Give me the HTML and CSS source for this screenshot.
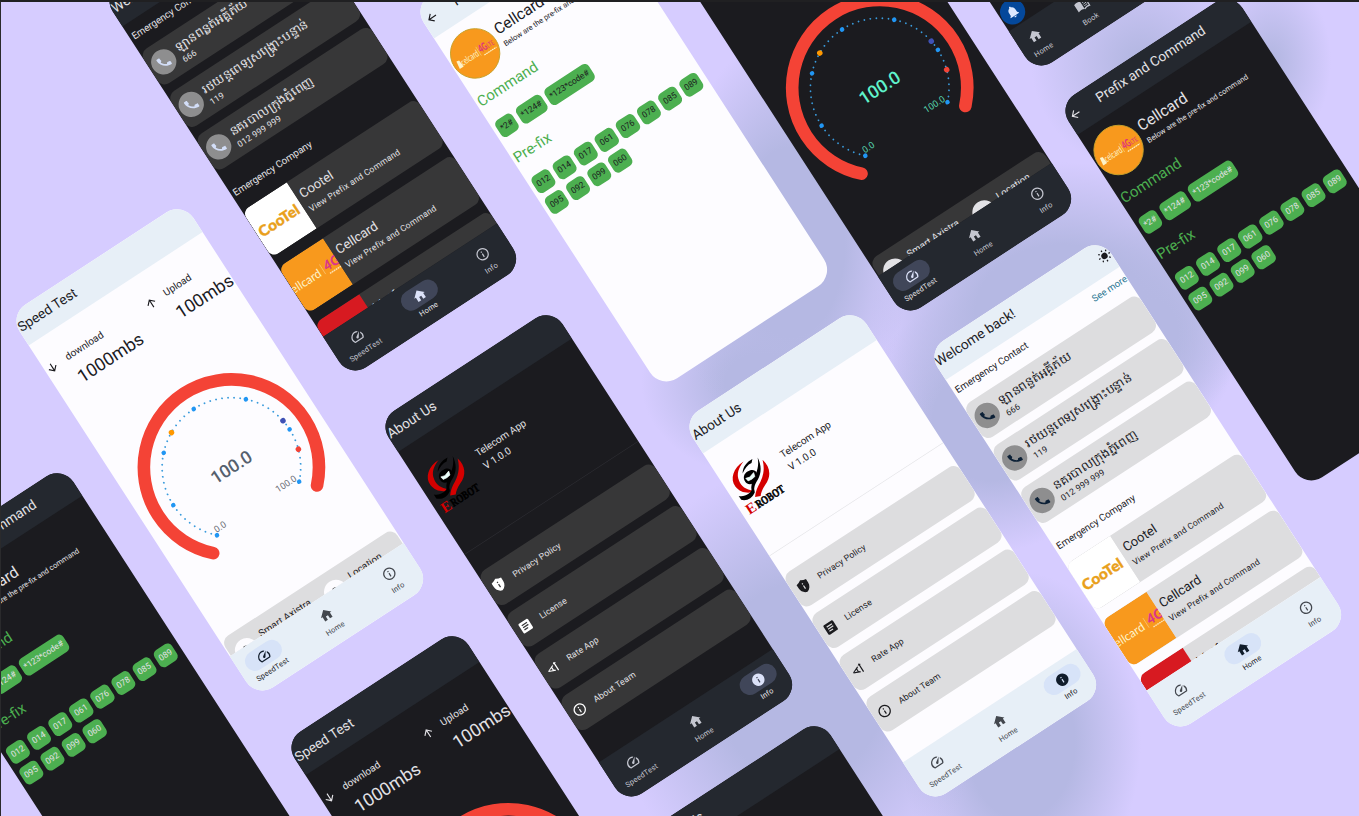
FILE: index.html
```html
<!DOCTYPE html>
<html lang="en">
<head>
<meta charset="utf-8">
<title>Telecom App</title>
<link rel="stylesheet" href="styles.css">
</head>
<body>
<svg class="sprite" aria-hidden="true">
  <symbol id="home" viewBox="0 0 24 24"><path d="M10 20v-6h4v6h5v-8h3L12 3 2 12h3v8z"/></symbol>
  <symbol id="info" viewBox="0 0 24 24"><path d="M11 7h2v2h-2zm0 4h2v6h-2zm1-9C6.48 2 2 6.48 2 12s4.48 10 10 10 10-4.48 10-10S17.52 2 12 2zm0 18c-4.41 0-8-3.59-8-8s3.59-8 8-8 8 3.59 8 8-3.59 8-8 8z"/></symbol>
  <symbol id="info-fill" viewBox="0 0 24 24"><path d="M12 2C6.48 2 2 6.48 2 12s4.48 10 10 10 10-4.48 10-10S17.52 2 12 2zm1 15h-2v-6h2v6zm0-8h-2V7h2v2z"/></symbol>
  <symbol id="speed" viewBox="0 0 24 24"><path d="M20.38 8.57l-1.23 1.85a8 8 0 0 1-.22 7.58H5.07A8 8 0 0 1 15.58 6.85l1.85-1.23A10 10 0 0 0 3.35 19a2 2 0 0 0 1.72 1h13.85a2 2 0 0 0 1.74-1 10 10 0 0 0-.27-10.44zm-9.79 6.84a2 2 0 0 0 2.83 0l5.66-8.49-8.49 5.66a2 2 0 0 0 0 2.83z"/></symbol>
  <symbol id="call" viewBox="0 0 24 24"><path d="M20.01 15.38c-1.23 0-2.42-.2-3.53-.56-.35-.12-.74-.03-1.01.24l-1.57 1.97c-2.83-1.35-5.48-3.9-6.89-6.83l1.95-1.66c.27-.28.35-.67.24-1.02-.37-1.11-.56-2.3-.56-3.53 0-.54-.45-.99-.99-.99H4.19C3.65 3 3 3.24 3 3.99 3 13.28 10.73 21 20.01 21c.71 0 .99-.63.99-1.18v-3.45c0-.54-.45-.99-.99-.99z"/></symbol>
  <symbol id="back" viewBox="0 0 24 24"><path d="M20 11H7.83l5.59-5.59L12 4l-8 8 8 8 1.41-1.41L7.83 13H20v-2z"/></symbol>
  <symbol id="down" viewBox="0 0 24 24"><path d="M20 12l-1.41-1.41L13 16.17V4h-2v12.17l-5.58-5.59L4 12l8 8z"/></symbol>
  <symbol id="up" viewBox="0 0 24 24"><path d="M4 12l1.41 1.41L11 7.83V20h2V7.83l5.58 5.59L20 12l-8-8z"/></symbol>
  <symbol id="shield" viewBox="0 0 24 24"><path d="M12 1Q16 4 21 4.5V11c0 5.55-3.84 10.74-9 12-5.16-1.26-9-6.45-9-12V4.5Q8 4 12 1zm1 16v-6h-2v6zm0-8V7h-2v2z"/></symbol>
  <symbol id="article" viewBox="0 0 24 24"><path d="M19 3H5c-1.1 0-2 .9-2 2v14c0 1.1.9 2 2 2h14c1.1 0 2-.9 2-2V5c0-1.1-.9-2-2-2zm-5 14H7v-2h7v2zm3-4H7v-2h10v2zm0-4H7V7h10v2z"/></symbol>
  <symbol id="rate" viewBox="0 0 24 24"><path d="M3 12v1.5l11 4.75v-2.1l-2.2-.9v-5l2.2-.9v-2.1L3 12zm7 2.62l-5.02-1.87L10 10.88v3.74zm8-10.37l-3 3h2v12.5h2V7.25h2l-3-3z"/></symbol>
  <symbol id="bell" viewBox="0 0 24 24"><path d="M12 22c1.1 0 2-.9 2-2h-4c0 1.1.89 2 2 2zm6-6v-5c0-3.07-1.64-5.64-4.5-6.32V4c0-.83-.67-1.5-1.5-1.5s-1.5.67-1.5 1.5v.68C7.63 5.36 6 7.92 6 11v5l-2 2v1h16v-1l-2-2z"/></symbol>
  <symbol id="book" viewBox="0 0 24 24"><path d="M1 5.5C4 4 8.5 4 12 6v14C8.5 18 4 18 1 19.5z"/><path d="M12 6c3.5-2 7.5-2 10-.5v13.5c-3-1.3-7-1-10 1" fill="none" stroke="currentColor" stroke-width="1.8"/><path d="M14 9.5q3-1.2 6-.6M14 12.5q3-1.2 6-.6M14 15.5q3-1.2 6-.6" fill="none" stroke="currentColor" stroke-width="1.4"/></symbol>
  <symbol id="pin" viewBox="0 0 24 24"><path d="M12 2C8 2 5 5 5 9c0 5 7 13 7 13s7-8 7-13c0-4-3-7-7-7z"/></symbol>
  <symbol id="sun" viewBox="0 0 24 24"><circle cx="12" cy="12" r="5.5"/><path d="M12 .8v3M12 20.2v3M.8 12h3M20.2 12h3M4.1 4.1l2 2M17.9 17.9l2 2M4.1 19.9l2-2M17.9 6.1l2-2" stroke="currentColor" stroke-width="2.2"/></symbol>
  <symbol id="cootel" viewBox="0 0 96 96"><rect width="96" height="96" fill="#fff"/><text x="8" y="58" textLength="80" lengthAdjust="spacingAndGlyphs" font-family="Lato, sans-serif" font-weight="900" font-size="26" fill="#e9a01b" stroke="#e9a01b" stroke-width=".6">CooTel</text></symbol>
  <symbol id="cellcard" viewBox="0 0 96 96"><rect width="96" height="96" fill="#f8991d"/><text x="0" y="54" textLength="60" lengthAdjust="spacingAndGlyphs" font-family="Lato, sans-serif" font-size="21" fill="#fdf3c8">ellcard</text><path d="M66 35v20" stroke="#fbd48c"/><text x="70" y="52" font-family="Lato, sans-serif" font-weight="900" font-style="italic" font-size="24" fill="#d9368b">4G</text><path d="M73 58h25" stroke="#fbe0b0" stroke-width="2.5" stroke-dasharray="3 1"/></symbol>
  <symbol id="cellcard-round" viewBox="0 0 88 88"><circle cx="44" cy="44" r="43" fill="#f8991d" stroke="#c5a12c" stroke-width="1.5"/><path d="M7 52l2-14 5 1 1 13z" fill="#fdf3c8"/><text x="15" y="51" textLength="34" lengthAdjust="spacingAndGlyphs" font-family="Lato, sans-serif" font-size="17" fill="#fdf3c8">celcard</text><path d="M51 35v18" stroke="#fbd48c"/><text x="53" y="49" textLength="15" lengthAdjust="spacingAndGlyphs" font-family="Lato, sans-serif" font-weight="900" font-size="19" fill="#e0357c">4G</text><text x="68" y="49" textLength="14" lengthAdjust="spacingAndGlyphs" font-family="Lato, sans-serif" font-size="12" fill="#e0357c">LTE</text><path d="M56 55h25" stroke="#fdf3c8" stroke-width="2" stroke-dasharray="3 1"/></symbol>
  <symbol id="erobot" viewBox="0 0 76 86">
    <path d="M42 0C20 0 5 13 6 29c1 11 7 18 16 23l7 1C18 43 15 34 17 24 19 12 28 5 42 0z" fill="#d40000"/>
    <path d="M71 16c5 18-3 33-20 39-9 4-14 8-17 12l-9-4c4-5 8-9 15-13 14-7 25-16 31-34z" fill="#d40000"/>
    <path d="M66 8c-2 16-9 26-20 32-9 4-13 7-17 14l-3-4c3-7 8-11 15-16 11-6 19-12 25-26z" fill="#000"/>
    <path d="M2 46c9 8 20 8 30 1l-3 9c-10 7-21 5-27-2zM57 5c-11-1-22 2-28 12 8-6 16-8 23-7z" fill="#000"/>
    <path d="M25 31c0-8 6-13 14-12 8 0 12 5 11 10-3 8-9 12-15 12s-10-4-10-10z" fill="#000"/>
    <path d="M29 27l7 2 10-3-2 7-7 1-7-1z" fill="#e8fffa" stroke="#fff" stroke-width="1"/>
    <text x="0" y="84" font-family="Liberation Serif, serif" font-weight="700" font-size="26" fill="#d40000">E</text>
    <text x="19" y="83" textLength="56" lengthAdjust="spacingAndGlyphs" font-family="Liberation Serif, serif" font-weight="700" font-size="20" fill="#000" stroke="#000" stroke-width=".9">ROBOT</text>
  </symbol>
  <symbol id="gauge" viewBox="-165 -165 330 330">
    <path d="M-107.8 107.8A152.5 152.5 0 1 1 107.8 107.8" fill="none" stroke="#f44336" stroke-width="22" stroke-linecap="round"/>
    <path d="M-85.3 85.3A120.7 120.7 0 1 1 85.3 85.3" fill="none" stroke="#3a9bdc" stroke-width="3.2" stroke-linecap="round" stroke-dasharray="0 1" pathLength="54"/>
    <g fill="#2196f3"><circle cx="-85.3" cy="85.3" r="4"/><circle cx="-120.7" cy="0" r="4"/><circle cx="-85.3" cy="-85.3" r="4"/><circle cx="0" cy="-120.7" r="4"/><circle cx="85.3" cy="-85.3" r="4"/><circle cx="120.7" cy="0" r="4"/><circle cx="85.3" cy="85.3" r="4"/></g>
    <circle cx="-54.8" cy="-107.5" r="4.8" fill="#ff9800"/><circle cx="119.2" cy="-18.9" r="4.8" fill="#3f51b5"/><circle cx="114.8" cy="37.3" r="4.8" fill="#f44336"/>
  </symbol>
</svg>
<main class="canvas" id="canvas"></main>
<script src="app.js"></script>
</body>
</html>
```

FILE: styles.css
```css
* { box-sizing: border-box; }
body { margin: 0; font-family: Roboto, "Noto Sans", sans-serif; }
.sprite { position: absolute; width: 0; height: 0; }
svg { fill: currentColor; flex: none; display: block; }

.canvas {
  position: relative;
  width: 1359px;
  height: 816px;
  overflow: hidden;
  border-top: 2px solid #202022;
  border-left: 1px solid #2a2a2c;
  background:
    radial-gradient(ellipse 120px 210px at 790px 240px, #b5b8e3 45%, #b5b8e300 100%),
    radial-gradient(ellipse 190px 150px at 1060px 310px, #b5b8e3 45%, #b5b8e300 100%),
    radial-gradient(ellipse 130px 130px at 990px 420px, #b5b8e3 45%, #b5b8e300 100%),
    radial-gradient(ellipse 90px 110px at 1150px 330px, #b5b8e3 30%, #b5b8e300 100%),
    radial-gradient(ellipse 110px 110px at 1140px 60px, #b5b8e3 10%, #b5b8e300 100%),
    radial-gradient(ellipse 60px 90px at 1270px 60px, #b5b8e3 10%, #b5b8e300 100%),
    radial-gradient(ellipse 190px 220px at 800px 680px, #b5b8e3 45%, #b5b8e300 100%),
    radial-gradient(ellipse 120px 170px at 1020px 740px, #b5b8e3 45%, #b5b8e300 100%),
    radial-gradient(ellipse 120px 95px at 760px 380px, #b5b8e3 30%, #b5b8e300 100%),
    #d6ccff;
}

/* Phones are pinned by their centre on the tilted board. */
.phone {
  --ink: #1b1b1f;
  --bg: #fdfcff;
  --bar: #e7eff7;
  --card: #dddddf;
  --muted: #43474e;
  --pill: #d7e3f8;
  --active: #101c2b;
  --avatar: #fdfcff;
  --call: #0c2036;
  --accent: #55606e;
  --tick: #6a6d75;
  --line: #e2e2e5;
  --top: 63px;
  --foot: 86px;
  position: absolute;
  width: 361px;
  height: 793px;
  margin: -396.5px 0 0 -180.5px;
  transform: translate(-.7px, -1.7px) rotate(-33.1deg) skewX(-.2deg) scale(.575);
  display: flex;
  flex-direction: column;
  overflow: hidden;
  border-radius: 34px;
  background: var(--bg);
  color: var(--ink);
}
.dark {
  --ink: #e3e2e6;
  --bg: #1b1b1f;
  --bar: #24282f;
  --card: #373738;
  --muted: #c4c6d0;
  --pill: #404659;
  --active: #dce2f9;
  --avatar: #e3e2e6;
  --call: #d3def8;
  --accent: #5ff3cb;
  --tick: #58d6b0;
  --line: #2e2e33;
}

.bar { height: var(--top); flex: none; display: flex; align-items: flex-end; justify-content: space-between; padding: 0 0 20px 2px; background: var(--bar); }
.bar h1 { margin: 0; font-size: 23.8px; line-height: 28px; font-weight: 400; white-space: nowrap; }
.bar .sun { width: 24px; height: 24px; margin: 0 0 -2px 0; }
.bar.with-back { justify-content: flex-start; gap: 34px; padding-left: 5px; }
.with-back svg { width: 24px; height: 24px; }
.body { flex: 1; min-height: 0; overflow: hidden; display: flex; flex-direction: column; }

.nav { flex: none; height: var(--foot); margin: 0 -15px; padding-top: 13px; display: flex; background: var(--bar); color: var(--muted); font-size: 13px; line-height: 16px; letter-spacing: .4px; }
.nav div { flex: 1; display: flex; flex-direction: column; align-items: center; gap: 4px; }
.nav span { width: 70px; height: 35px; border-radius: 18px; display: grid; place-items: center; }
.nav svg { width: 26px; height: 26px; }
.nav .on { color: var(--ink); }
.nav .on span { background: var(--pill); color: var(--active); }

.row-head { display: flex; justify-content: space-between; padding: 15px 1px 0 5px; font-size: 17px; line-height: 20px; flex: none; }
.row-head a { color: #1f7490; font-size: 16.5px; margin-top: -2px; }
.contacts { display: flex; flex-direction: column; gap: 16px; margin: 20px 0 21px; }
.contact { height: 72px; border-radius: 15px; background: var(--card); display: flex; gap: 8px; padding: 14px 0 0 5px; }
.contact i { width: 44px; height: 44px; border-radius: 50%; background: #8e8e8f; color: var(--call); display: grid; place-items: center; }
.contact i svg { width: 27px; height: 27px; }
.contact b { display: block; width: max-content; font-weight: 400; font-size: 21px; line-height: 26px; white-space: nowrap; transform: scaleX(1.08); transform-origin: 0 0; }
.sub { display: block; font-size: 15px; letter-spacing: .4px; line-height: 18px; white-space: nowrap; }
.contact .sub { margin-top: 3px; }
.companies { display: flex; flex-direction: column; gap: 20px; margin-top: 24px; }
.company { height: 96px; flex: none; border-radius: 14px; overflow: hidden; background: var(--card); display: flex; gap: 8px; }
.company > svg, .swatch { width: 96px; height: 96px; margin-left: -3px; flex: none; }
.swatch { background: #d71a21; }
.company b { display: block; font-weight: 400; font-size: 22.8px; line-height: 27px; padding: 18px 0 8px; }
.company:last-child b { padding-top: 22px; }

.stats { display: grid; grid-template-columns: 205px 1fr; padding: 43px 0 0 2px; }
.stat { display: flex; gap: 17px; font-size: 17.4px; line-height: 20px; }
.stat > svg { width: 24px; height: 24px; }
.stat + .stat { gap: 16px; }
.stat b { display: block; font-weight: 400; font-size: 31px; line-height: 36px; margin-top: 15px; }
.dial { position: relative; width: 330px; height: 330px; flex: none; margin: 91px 0 77px 16px; }
.dial > svg { width: 330px; height: 330px; }
.dial b, .dial em, .dial s { position: absolute; white-space: nowrap; transform: translate(-50%, -50%); font-style: normal; text-decoration: none; }
.dial b { left: 50%; top: 50%; font-size: 31px; font-weight: 500; color: var(--accent); }
.dial em, .dial s { font-size: 16px; color: var(--tick); }
.dial em { left: 92px; top: 241px; }
.dial s { left: 229px; top: 241px; }
.server { flex: none; height: 80px; margin: 0 2px; border-radius: 15px; background: var(--card); display: grid; grid-template-columns: 185px 1fr; padding: 18px 0 0 8px; font-size: 17.4px; line-height: 20px; }
.server div { display: flex; gap: 12px; white-space: nowrap; }
.server i { width: 42px; height: 42px; border-radius: 50%; background: var(--avatar); color: #333; display: grid; place-items: center; }
.server svg { width: 20px; height: 20px; }
.dark .server svg { visibility: hidden; }

.hero { height: 213px; flex: none; border-bottom: 1.5px solid var(--line); display: flex; gap: 26px; padding: 50px 0 0 10px; font-size: 17.4px; }
.hero svg { width: 76px; height: 86px; }
.hero p { margin: 17px 0 0; line-height: 21px; }
.hero p + p { margin-top: 5px; }
.options { display: flex; flex-direction: column; gap: 16.3px; padding-top: 41px; }
.option { height: 70px; border-radius: 15px; background: var(--card); display: flex; align-items: center; gap: 17px; padding-left: 9px; font-size: 15.2px; letter-spacing: .25px; }
.option svg { width: 26px; height: 26px; }
.dark .option svg { color: #fff; }

.brand { display: flex; gap: 7px; padding: 17px 0 16px 2px; white-space: nowrap; }
.brand svg { width: 88px; height: 88px; }
.brand b { display: block; font-weight: 400; font-size: 27px; line-height: 30px; padding: 15px 0 5px; }
.brand span { font-size: 13.2px; line-height: 18px; display: block; }
.group { margin: 0; padding-left: 4px; font-size: 26px; line-height: 30px; font-weight: 400; color: #4caf50; }
.chips { display: flex; flex-wrap: wrap; gap: 9px 7.5px; padding: 28px 0 24px 7px; width: 368px; }
.chips span { height: 34px; padding: 0 5.7px; border-radius: 9px; background: #4caf50; font-size: 14.8px; line-height: 32px; }

.notice { margin-top: auto; display: flex; gap: 19px; padding: 0 0 3px 2px; font-size: 17px; line-height: 36px; }
.notice i { width: 44px; height: 44px; border-radius: 50%; background: #04489b; color: #dce8ff; display: grid; place-items: center; }
.notice svg { width: 26px; height: 26px; }

.p-home-d { left: 312.4px; top: 129.6px; --top: 65px; --foot: 85px; }
.p-home-l { left: 1137.2px; top: 485.2px; --top: 60px; --foot: 90px; }
.p-prefix-l { left: 623px; top: 140.6px; --top: 67px; }
.p-prefix-d { left: 1268px; top: 239.6px; --top: 62px; }
.p-prefix-d2 { left: 99.7px; top: 713.1px; --top: 62px; }
.p-speed-l { left: 219.9px; top: 449.3px; }
.p-speed-d { left: 867.9px; top: 69.9px; --top: 64px; }
.p-speed-d2 { left: 494px; top: 876.1px; --top: 69px; }
.p-about-l { left: 892.3px; top: 555.9px; --top: 67px; }
.p-about-d { left: 588.8px; top: 555.7px; --top: 64px; }
.p-about-d2 { left: 856.6px; top: 966.1px; --top: 63px; }
.p-alerts { left: 998.4px; top: -175.1px; }
```

FILE: app.js
```js
const icon = (id, cls = '') => `<svg class="${cls}"><use href="#${id}"/></svg>`;

const nav = (items, active) => `<nav class="nav">${items.map(([id, label]) =>
  `<div class="${label === active ? 'on' : ''}"><span>${icon(id === 'info' && label === active ? 'info-fill' : id)}</span>${label}</div>`).join('')}</nav>`;
const tabs = [['speed', 'SpeedTest'], ['home', 'Home'], ['info', 'Info']];

const contact = (name, number) => `<div class="contact"><i>${icon('call')}</i><div><b>${name}</b><span class="sub">${number}</span></div></div>`;
const company = (logo, name) => `<div class="company">${logo}<div><b>${name}</b><span class="sub">View Prefix and Command</span></div></div>`;
const option = (id, label) => `<div class="option">${icon(id)}${label}</div>`;
const chips = list => `<div class="chips">${list.map(c => `<span>${c}</span>`).join('')}</div>`;

const screens = {
  home: () => `<header class="bar"><h1>Welcome back!</h1>${icon('sun', 'sun')}</header>
    <div class="body">
      <div class="row-head">Emergency Contact<a>See more</a></div>
      <div class="contacts">${contact('ឡានពន្លត់អគ្គីភ័យ', '666')}${contact('រថយន្តពេទ្យសង្គ្រោះបន្ទាន់', '119')}${contact('នគរបាលក្រុងភ្នំពេញ', '012 999 999')}</div>
      <div class="row-head">Emergency Company</div>
      <div class="companies">${company(icon('cootel'), 'Cootel')}${company(icon('cellcard'), 'Cellcard')}${company('<div class="swatch"></div>', 'Metfone')}</div>
    </div>${nav(tabs, 'Home')}`,

  speed: () => `<header class="bar"><h1>Speed Test</h1></header>
    <div class="body">
      <div class="stats">
        <div class="stat">${icon('down')}<div>download<b>1000mbs</b></div></div>
        <div class="stat">${icon('up')}<div>Upload<b>100mbs</b></div></div>
      </div>
      <div class="dial">${icon('gauge')}<b>100.0</b><em>0.0</em><s>100.0</s></div>
      <div class="server"><div><i>${icon('pin')}</i>Smart Axistra</div><div><i>${icon('pin')}</i>Location</div></div>
    </div>${nav(tabs, 'SpeedTest')}`,

  about: () => `<header class="bar"><h1>About Us</h1></header>
    <div class="body">
      <div class="hero">${icon('erobot')}<div><p>Telecom App</p><p>V 1.0.0</p></div></div>
      <div class="options">${option('shield', 'Privacy Policy')}${option('article', 'License')}${option('rate', 'Rate App')}${option('info', 'About Team')}</div>
    </div>${nav(tabs, 'Info')}`,

  prefix: () => `<header class="bar with-back">${icon('back')}<h1>Prefix and Command</h1></header>
    <div class="body">
      <div class="brand">${icon('cellcard-round')}<div><b>Cellcard</b><span>Below are the pre-fix and command</span></div></div>
      <h2 class="group">Command</h2>${chips(['*2#', '*124#', '*123*code#'])}
      <h2 class="group">Pre-fix</h2>${chips(['012', '014', '017', '061', '076', '078', '085', '089', '095', '092', '099', '060'])}
    </div>`,

  alerts: () => `<div class="body"><div class="notice"><i>${icon('bell')}</i>Assistant</div></div>
    ${nav([['home', 'Home'], ['book', 'Book'], ['bell', 'Alerts'], ['info', 'Info']], '')}`
};

const board = [
  ['home', 'dark p-home-d'], ['home', 'p-home-l'],
  ['prefix', 'p-prefix-l'], ['prefix', 'dark p-prefix-d'], ['prefix', 'dark p-prefix-d2'],
  ['speed', 'p-speed-l'], ['speed', 'dark p-speed-d'], ['speed', 'dark p-speed-d2'],
  ['about', 'p-about-l'], ['about', 'dark p-about-d'], ['about', 'dark p-about-d2'],
  ['alerts', 'dark p-alerts']
];
document.getElementById('canvas').innerHTML =
  board.map(([screen, cls]) => `<section class="phone ${cls}">${screens[screen]()}</section>`).join('');
```
